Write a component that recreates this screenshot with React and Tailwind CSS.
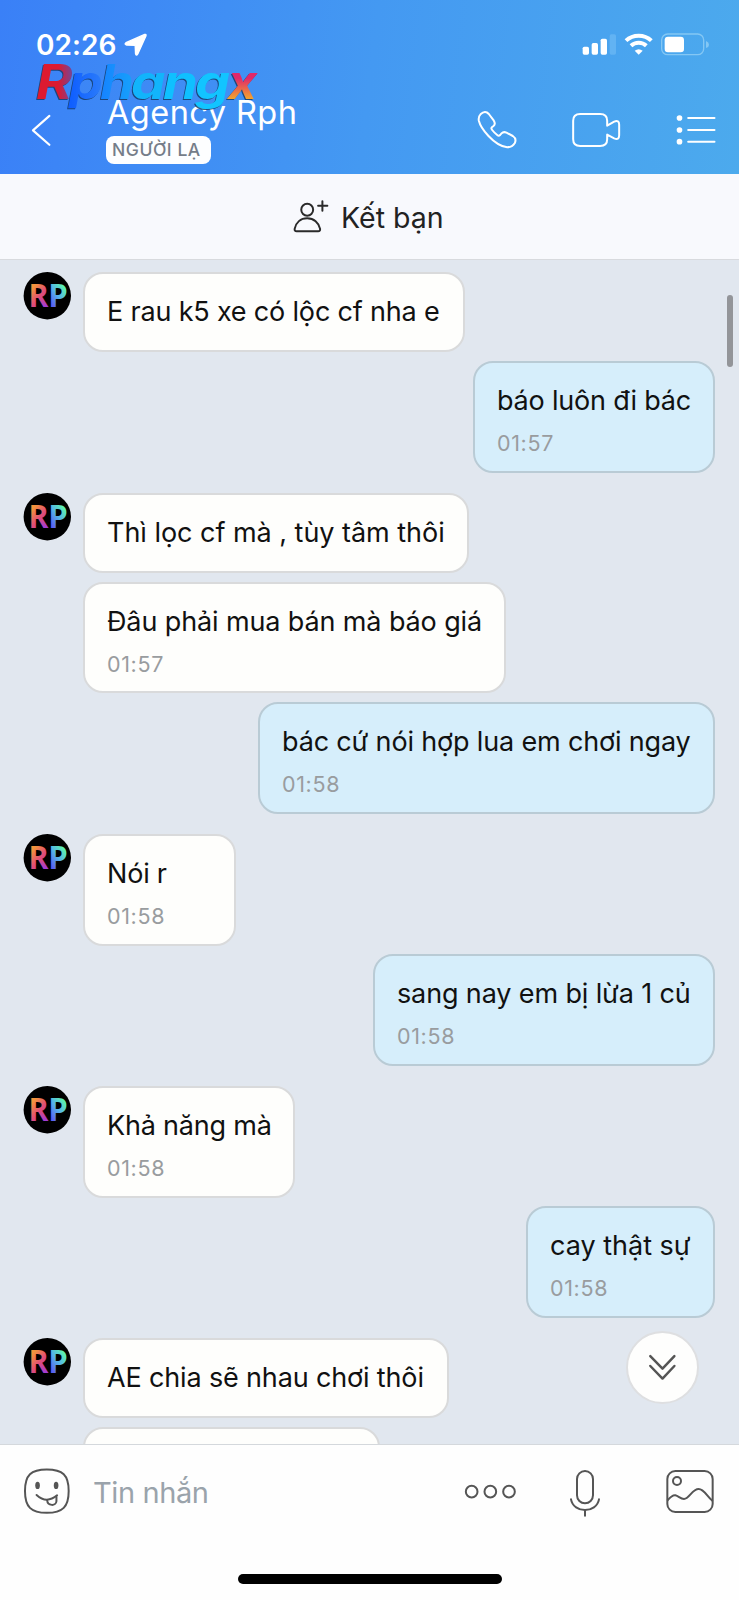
import React from "react";
import clsx from "clsx";

const messages = [
  { text: "E rau k5 xe có lộc cf nha e", avatar: true, box: "w-[382px] h-[80px] mb-[9px]", track: "tracking-[-0.18px]" },
  { text: "báo luôn đi bác", time: "01:57", mine: true, box: "w-[242px] h-[112px] mb-[20px]", track: "tracking-[-0.2px]" },
  { text: "Thì lọc cf mà , tùy tâm thôi", avatar: true, box: "w-[386px] h-[80px] mb-[9px]", track: "tracking-[-0.03px]" },
  { text: "Đâu phải mua bán mà báo giá", time: "01:57", box: "w-[423px] h-[111px] mb-[9px]", track: "tracking-[-0.12px]" },
  { text: "bác cứ nói hợp lua em chơi ngay", time: "01:58", mine: true, box: "w-[457px] h-[112px] mb-[20px]", track: "tracking-[-0.16px]" },
  { text: "Nói r", time: "01:58", avatar: true, box: "w-[153px] h-[112px] mb-[8px]", track: "tracking-[-0.2px]" },
  { text: "sang nay em bị lừa 1 củ", time: "01:58", mine: true, box: "w-[342px] h-[112px] mb-[20px]", track: "tracking-[-0.13px]" },
  { text: "Khả năng mà", time: "01:58", avatar: true, box: "w-[212px] h-[112px] mb-[8px]", track: "tracking-[-0.2px]" },
  { text: "cay thật sự", time: "01:58", mine: true, box: "w-[189px] h-[112px] mb-[20px]", track: "tracking-[0px]" },
  { text: "AE chia sẽ nhau chơi thôi", avatar: true, box: "w-[366px] h-[80px] mb-[9px]", track: "tracking-[-0.15px]" },
  { text: "", box: "w-[297px] h-[80px]", track: "" },
];

function Avatar() {
  return (
    <svg viewBox="0 0 48 48" className="size-12 shrink-0">
      <defs>
        <linearGradient id="rp-r" gradientUnits="userSpaceOnUse" x1="8" y1="18" x2="25" y2="32">
          <stop offset="0" stopColor="#f2943c" />
          <stop offset="0.5" stopColor="#e04c78" />
          <stop offset="1" stopColor="#a03bd8" />
        </linearGradient>
        <linearGradient id="rp-p" gradientUnits="userSpaceOnUse" x1="27" y1="30" x2="43" y2="18">
          <stop offset="0" stopColor="#5a62f0" />
          <stop offset="0.5" stopColor="#55b0ea" />
          <stop offset="1" stopColor="#5cf0b0" />
        </linearGradient>
      </defs>
      <circle cx="24.3" cy="23.7" r="23.7" fill="#000" />
      <g fontFamily="'Open Sans', sans-serif" fontWeight="700" fontSize="32">
        <text x="5.4" y="35.2" textLength="20" lengthAdjust="spacingAndGlyphs" fill="url(#rp-r)">R</text>
        <text x="25.2" y="35.2" textLength="19.5" lengthAdjust="spacingAndGlyphs" fill="url(#rp-p)">P</text>
      </g>
    </svg>
  );
}

function Message({ text, time, mine, avatar, box, track }) {
  return (
    <div className={clsx("flex shrink-0", mine ? "justify-end pr-6" : "pl-[23px]")}>
      {!mine && <div className="mr-3 w-12 shrink-0">{avatar && <Avatar />}</div>}
      <div
        className={clsx(
          "shrink-0 rounded-[20px] border-2 pt-5 pl-[22px]",
          mine ? "border-[#b9cbd5] bg-[#d6eefb]" : "border-[#d9dadb] bg-[#fefefc]",
          box
        )}
      >
        <p className={clsx("text-[27px] leading-9 whitespace-nowrap text-[#111]", track)}>{text}</p>
        {time && (
          <p className="mt-[10px] text-[21.5px] leading-7 tracking-[0.65px] text-[#999c9f]">{time}</p>
        )}
      </div>
    </div>
  );
}

function Watermark() {
  const glyphs = [
    ["R", 36, 36.5, "url(#wm-r)"],
    ["p", 69, 34, "url(#wm-p)"],
    ["h", 100, 34, "url(#wm-h)"],
    ["a", 131, 34.5, "#12b4fb"],
    ["n", 163, 35, "#0fc0ff"],
    ["g", 195, 35, "#12c4ff"],
    ["x", 228, 29, "url(#wm-x)"],
  ];
  return (
    <svg
      viewBox="30 45 235 80"
      className="absolute top-[45px] left-[30px] h-[80px] w-[235px] drop-shadow-[-0.5px_1.5px_0.5px_#12365fcc]"
    >
      <defs>
        <linearGradient id="wm-r" x1="0" y1="0" x2="1" y2="0">
          <stop offset="0.6" stopColor="#dc1a30" />
          <stop offset="1" stopColor="#6a4aa0" />
        </linearGradient>
        <linearGradient id="wm-p" x1="0" y1="0" x2="1" y2="0">
          <stop offset="0" stopColor="#0d5cff" />
          <stop offset="1" stopColor="#2c7dfa" />
        </linearGradient>
        <linearGradient id="wm-h" x1="0" y1="0" x2="1" y2="0">
          <stop offset="0" stopColor="#1682ff" />
          <stop offset="1" stopColor="#16a2fb" />
        </linearGradient>
        <linearGradient id="wm-x" x1="0" y1="0" x2="0" y2="1">
          <stop offset="0.45" stopColor="#e0286a" />
          <stop offset="0.8" stopColor="#f0a030" />
        </linearGradient>
      </defs>
      <g fontFamily="'Inter', sans-serif" fontWeight="700" fontStyle="italic" fontSize="47.5">
        {glyphs.map(([g, x, w, fill]) => (
          <text key={g} x={x} y="98.5" textLength={w} lengthAdjust="spacingAndGlyphs" fill={fill}>
            {g}
          </text>
        ))}
      </g>
    </svg>
  );
}

function Header() {
  return (
    <header className="relative h-[174px] shrink-0 bg-[linear-gradient(97deg,#3a80f7,#4499f2_50%,#4caaed)] text-white">
      <div className="flex h-[60px] items-start pt-[32px] pr-[29px] pl-9">
        <span className="mt-[-5px] text-[28px] leading-9 font-semibold tracking-[0.05px]">02:26</span>
        <svg viewBox="366 98 76 75" className="ml-[7px] h-[25px] w-[25px]">
          <path
            d="M432 105 L375 130 Q369 135 377 137 L403 138 L404 163 Q406 172 411 164 L436 109 Q437 103 432 105Z"
            fill="#fff"
            stroke="#fff"
            strokeWidth="4"
            strokeLinejoin="round"
          />
        </svg>
        <svg viewBox="630 95 390 75" className="ml-auto h-[25px] w-[130px]" fill="none">
          <rect x="638" y="139" width="19" height="24" rx="5" fill="#fff" />
          <rect x="665" y="128" width="19" height="35" rx="5" fill="#fff" />
          <rect x="692" y="115" width="19" height="48" rx="5" fill="#fff" />
          <rect x="719" y="102" width="19" height="61" rx="5" fill="#62b3f3" />
          <g stroke="#fff" strokeWidth="12">
            <path d="M768 121 C789 101 823 101 844 121" />
            <path d="M783 136 C796 124 816 124 829 136" />
          </g>
          <path d="M794 151 Q806 142 818 151 L806 163Z" fill="#fff" />
          <rect x="875" y="101" width="126" height="62" rx="18" stroke="#84c7f4" strokeWidth="4" />
          <rect x="884" y="109" width="58" height="47" rx="10" fill="#fff" />
          <path d="M1008 122 Q1017 126 1017 133 Q1017 140 1008 143Z" fill="#84c7f4" />
        </svg>
      </div>
      <div className="flex h-[113px] items-start">
        <svg viewBox="90 340 70 105" className="mt-[53px] ml-[30px] h-[35px] w-[23px]" fill="none">
          <path d="M149 348 L99 392 L149 436" stroke="#fff" strokeWidth="6.5" strokeLinecap="round" strokeLinejoin="round" />
        </svg>
        <div className="mt-[33px] ml-[53px] flex flex-col items-start">
          <h1 className="ml-[1px] text-[32.5px] leading-10 font-normal tracking-[0.45px] whitespace-nowrap">Agency Rph</h1>
          <span className="mt-[3px] flex h-7 w-[105px] items-center rounded-[8px] bg-[#fdfeff] pl-[6px] text-[17.5px] font-medium tracking-[0.55px] whitespace-nowrap text-[#757d89]">
            NGƯỜI LẠ
          </span>
        </div>
        <svg viewBox="320 330 125 120" className="mt-[50px] ml-auto h-10 w-[42px]" fill="none">
          <path
            d="M333 343 Q347 330 358 342 L373 362 Q379 372 372 378 L367 382 Q364 385 368 390 Q375 399 384 406 Q388 409 392 405 L396 400 Q402 394 411 398 L430 408 Q442 416 436 429 Q428 442 413 442 Q385 438 357 408 Q333 382 328 362 Q326 350 333 343Z"
            stroke="#fff"
            strokeWidth="6"
            strokeLinejoin="round"
          />
        </svg>
        <svg viewBox="600 330 155 120" className="mt-[50px] ml-[52px] h-10 w-[52px]" fill="none">
          <path
            d="M630 342 H690 Q711 342 711 362 V377 L732 365 Q747 359 747 374 V406 Q747 421 732 415 L711 404 V418 Q711 438 690 438 H630 Q609 438 609 418 V362 Q609 342 630 342Z"
            stroke="#fff"
            strokeWidth="6"
            strokeLinejoin="round"
          />
        </svg>
        <svg viewBox="915 330 125 120" className="mt-[50px] mr-[22px] ml-[53px] h-10 w-[42px]">
          <g fill="#fff">
            <circle cx="928" cy="354" r="8.5" />
            <circle cx="928" cy="390" r="8.5" />
            <circle cx="928" cy="425" r="8.5" />
          </g>
          <path d="M954 354 H1033 M954 390 H1033 M954 425 H1033" stroke="#fff" strokeWidth="6" strokeLinecap="round" />
        </svg>
      </div>
      <Watermark />
    </header>
  );
}

function Composer() {
  return (
    <footer className="flex h-[156px] shrink-0 flex-col border-t border-[#d4d8dc] bg-[#fefefe]">
      <div className="flex h-[129px] items-start pt-[23px] pr-6 pl-[23px]">
        <svg viewBox="70 445 145 150" className="h-[50px] w-[48px]" fill="none" stroke="#555" strokeWidth="6" strokeLinecap="round">
          <path d="M142 449 C190 449 208 466 208 514 C208 562 190 580 142 580 C94 580 76 562 76 514 C76 466 94 449 142 449Z" />
          <ellipse cx="114" cy="497" rx="7" ry="11" fill="#555" stroke="none" />
          <ellipse cx="170" cy="497" rx="7" ry="11" fill="#555" stroke="none" />
          <path d="M111 526 Q141 554 173 527" />
          <path d="M143 542 C144 560 170 560 171 545 V531" />
        </svg>
        <p className="mt-[7px] ml-[22px] text-[29px] leading-9 tracking-[-0.4px] text-[#9aa3ab]">Tin nhắn</p>
        <svg viewBox="70 475 165 150" className="ml-auto h-[50px] w-[55px]" fill="none" stroke="#555" strokeWidth="6">
          <circle cx="96" cy="546" r="17.5" />
          <circle cx="152" cy="546" r="17.5" />
          <circle cx="208" cy="546" r="17.5" />
        </svg>
        <svg viewBox="385 475 102 150" className="ml-[50px] h-[50px] w-[34px]" fill="none" stroke="#555" strokeWidth="6" strokeLinecap="round">
          <rect x="412" y="484" width="48" height="97" rx="24" />
          <path d="M394 569 C402 612 470 612 478 569" />
          <path d="M436 603 V618" />
        </svg>
        <svg viewBox="675 474 150 150" className="ml-[63px] h-[50px] w-[50px]" fill="none" stroke="#555" strokeWidth="6">
          <rect x="682" y="483" width="136" height="123" rx="24" />
          <circle cx="711" cy="513" r="12" />
          <path d="M682 572 C692 560 699 555 706 556 C716 558 721 567 732 567 C748 567 756 537 776 537 C792 537 800 558 818 573" />
        </svg>
      </div>
      <div className="mx-auto h-[10px] w-[264px] rounded-full bg-black" />
    </footer>
  );
}

export default function App() {
  return (
    <div className="flex h-[1600px] w-[739px] flex-col overflow-hidden bg-[#e1e7ef] font-['Inter','Noto_Sans',sans-serif]">
      <Header />
      <div className="flex h-[86px] shrink-0 items-start border-b border-[#d8dade] bg-[#f8f9fd] pl-[292px] text-[#222]">
        <svg viewBox="875 85 115 105" className="mt-[25px] h-[35px] w-[38px]" fill="none" stroke="#2a2a2a" strokeWidth="6" strokeLinecap="round">
          <circle cx="921" cy="117" r="18" />
          <path d="M889 182 H954 Q961 182 960 175 C956 156 941 143 921 143 C901 143 887 156 883 175 Q882 182 889 182Z" />
          <path d="M954 105 H982 M967 91 V120" />
        </svg>
        <span className="mt-[26px] ml-[11px] text-[28.5px] leading-9">Kết bạn</span>
      </div>
      <main className="relative h-[1184px] shrink-0 overflow-hidden">
        <div className="flex flex-col pt-[12px]">
          {messages.map((m, i) => (
            <Message key={i} {...m} />
          ))}
        </div>
        <div className="absolute top-[35px] right-[6px] h-[72px] w-[6px] rounded-full bg-[#939599]" />
        <button className="absolute top-[1071px] left-[626px] flex size-[73px] items-center justify-center rounded-full border-2 border-[#dedfe1] bg-[#fefefd]">
          <svg viewBox="620 130 94 84" className="mb-[2px] h-7 w-[31px]" fill="none" stroke="#555" strokeWidth="7.5" strokeLinecap="round" strokeLinejoin="round">
            <path d="M630 139 L667 177 L703 139 M630 169 L667 207 L703 169" />
          </svg>
        </button>
      </main>
      <Composer />
    </div>
  );
}
